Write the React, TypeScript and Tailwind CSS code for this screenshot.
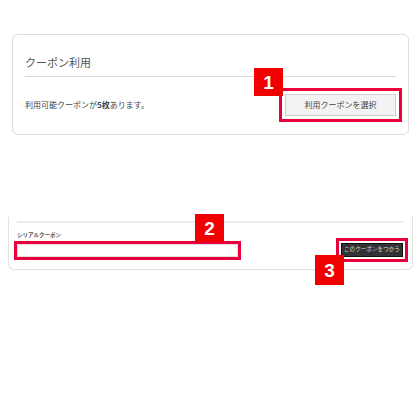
import React from 'react'

const jp = "font-['Noto_Sans_CJK_JP','Noto_Sans',sans-serif]"

function Badge({ n, className }: { n: string; className: string }) {
  return (
    <div
      className={`absolute flex h-[28px] w-[29px] items-center justify-center bg-[#f00000] text-white font-bold text-[19px] leading-none font-['Liberation_Sans',sans-serif] ${className}`}
    >
      {n}
    </div>
  )
}

export default function App() {
  return (
    <div className={`w-[420px] h-[420px] bg-white pt-[34px] ${jp}`}>
      {/* coupon usage card */}
      <div className="relative ml-[12px] w-[397px] rounded-[6px] border border-[#dcdcdc] px-[12px] pt-[18px] pb-[18px]">
        <div className="border-b border-[#d9d9d9] pb-[5px] text-[11px] leading-[18px] text-[#555]">
          クーポン利用
        </div>
        <div className="mt-[17px] flex items-center justify-between">
          <p className="text-[8px] leading-[12px] text-[#444]">
            利用可能クーポンが<b className="font-bold">5枚</b>あります。
          </p>
          <button className="h-[22px] w-[111px] rounded-none border border-[#cfcfcf] bg-[#f3f3f3] text-[8px] text-[#444] outline-[3px] outline-solid outline-[#e8003d] outline-offset-[3px]">
            利用クーポンを選択
          </button>
        </div>
        <Badge n="1" className="left-[241px] top-[33px]" />
      </div>

      {/* serial coupon */}
      <div className="relative mt-[82px] ml-[8px] w-[405px] rounded-b-[6px] border-x border-b border-[#e2e2e2] px-[8px] pt-[4px] pb-[12px]">
        <div className="h-[2px] bg-[#ececec]" />
        <div className="mt-[8px] text-[5.5px] leading-[8px] font-bold text-[#555]">
          シリアルクーポン
        </div>
        <div className="mt-[4px] flex items-end justify-between pr-[1px]">
          <input
            className="h-[13px] w-[221px] rounded-none border border-[#dedede] bg-white outline-[3px] outline-solid outline-[#e8003d] outline-offset-[0px]"
            readOnly
          />
          <button className="h-[14px] w-[62px] rounded-none border border-[#111] bg-[#333] text-[5.6px] leading-none text-[#ddd] outline-[3px] outline-solid outline-[#e8003d] outline-offset-[2px]">
            このクーポンをつかう
          </button>
        </div>
        <Badge n="2" className="left-[186px] top-[-3px]" />
        <Badge n="3" className="left-[306px] top-[38px] h-[30px]" />
      </div>
    </div>
  )
}
